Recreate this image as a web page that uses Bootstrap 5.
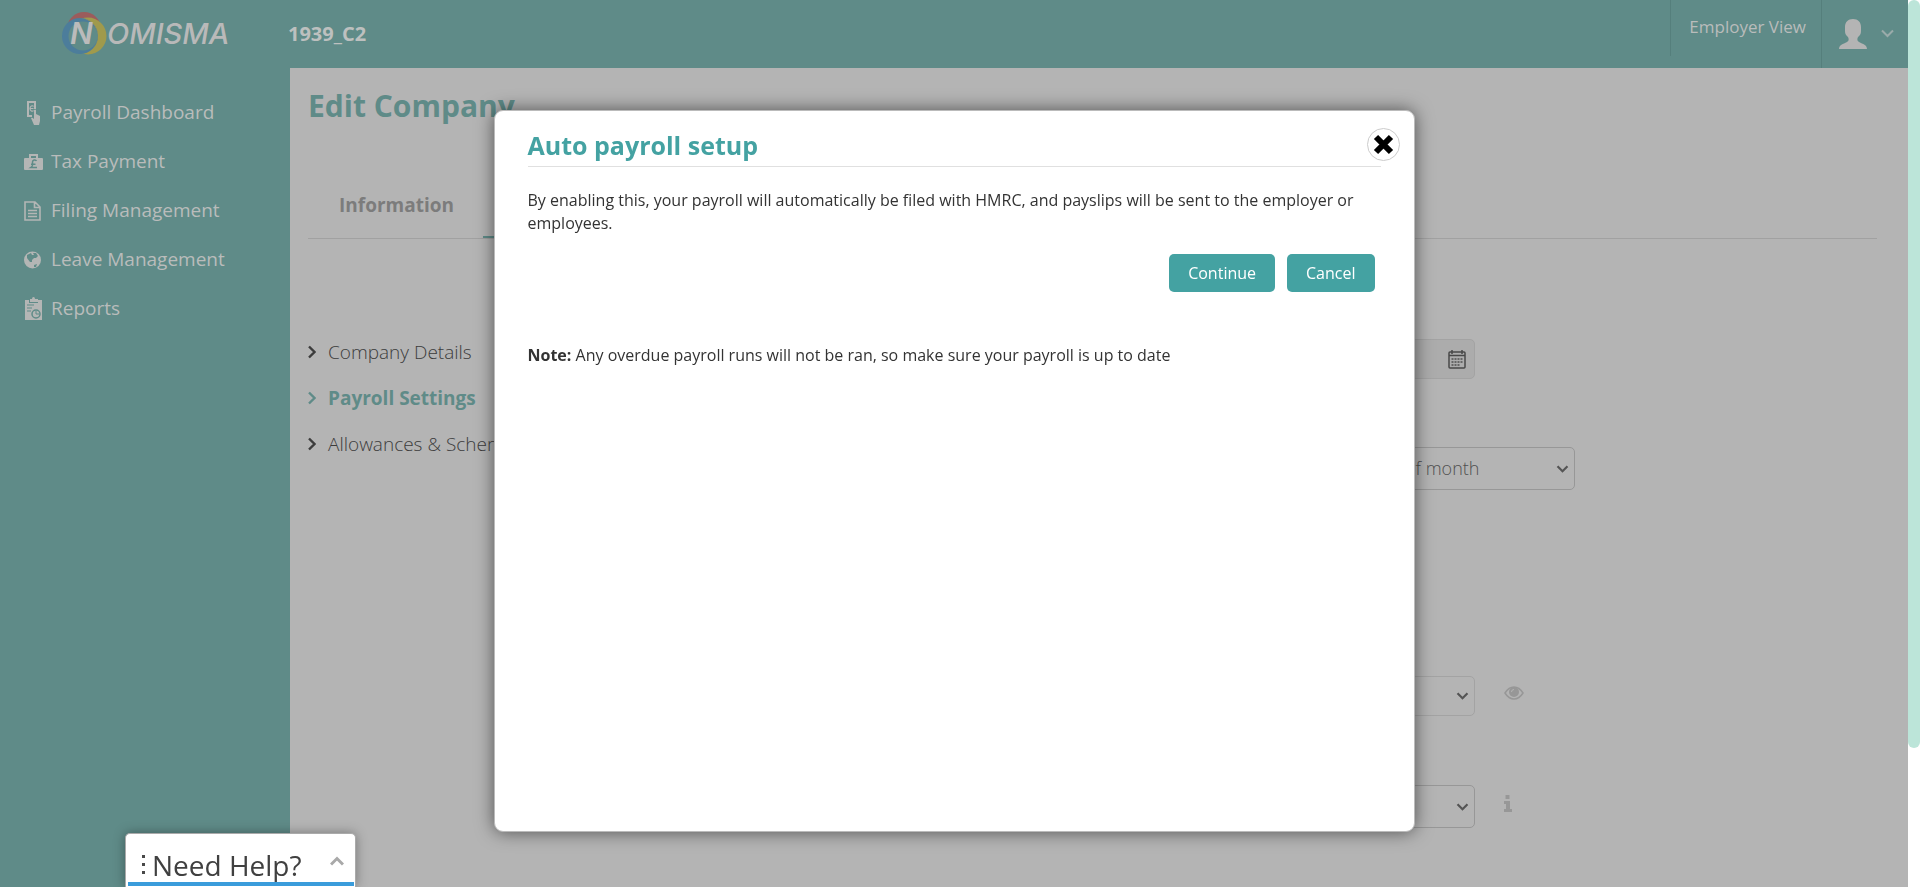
<!DOCTYPE html>
<html lang="en">
<head>
<meta charset="utf-8">
<meta name="viewport" content="width=device-width, initial-scale=1">
<title>Edit Company - Nomisma</title>
<link href="https://cdn.jsdelivr.net/npm/bootstrap@5.3.0/dist/css/bootstrap.min.css" rel="stylesheet">
<style>
  :root { --teal-dim: #5f8b88; --teal: #44a2a2; --page: #b4b4b4; --line: #a1a1a1; --pale: #b9bcbb; }
  body { font-family: "Open Sans", sans-serif; background: #fff; color: #333; overflow: hidden; }
  a { text-decoration: none; }
  .shell { background: var(--page); min-width: 0; }
  .scroll-track { width: 12px; background: #fff; }
  .scroll-thumb { height: 748px; background: #bce5d9; border-radius: 6px; }

  .topbar { height: 68px; background: var(--teal-dim); color: var(--pale); }
  .brand-box { width: 288px; padding: 10px 0 0 61px; }
  .company { font-size: 20px; font-weight: 700; line-height: 68px; color: #bdc0bf; }
  .top-link { height: 56px; padding: 0 15px 0 18px; font-size: 17px; line-height: 54px; color: var(--pale); border-left: 1px solid #557f7c; }
  .user-menu { width: 87px; padding: 0 14px 0 17px; border: 0; border-left: 1px solid #557f7c; background: none; }

  .side { width: 290px; background: var(--teal-dim); padding: 20px 0 0 23px; }
  .side a { height: 49px; font-size: 19px; color: var(--pale); gap: 8px; }
  .side svg { width: 20px; height: 24px; fill: #b4b6b5; }

  .content { padding: 17px 31px 0 18px; min-width: 0; }
  .content h1 { font-size: 30px; line-height: 42px; font-weight: 700; color: var(--teal-dim); margin: 0; }
  .tabs { margin-top: 41px; border-bottom: 1px solid var(--line); }
  .tabs a { width: 175px; height: 70px; padding: 22px 0 0 31px; font-size: 19px; line-height: 30px; font-weight: 700; color: #7c7c7c; border-bottom: 2px solid transparent; }
  .tabs a.active { border-color: var(--teal-dim); }
  .sections { padding-top: 90px; }
  .sections a { height: 46px; font-size: 19px; font-weight: 300; line-height: 46px; color: #3c3c3c; gap: 12px; }
  .sections a.active { font-weight: 700; color: var(--teal-dim); }
  .settings { width: 400px; margin-right: 302px; padding-top: 100px; }
  .field { background-color: transparent; border: 1px solid #a3a3a3; border-radius: 5px; font-size: 18px; color: #666; height: 40px; width: 300px; }
  .field[readonly] { background-color: #acacac; }
  .field-lg { height: 43px; border-color: #979797; }
  .pick { appearance: none; padding: 0 14px; background: no-repeat right 5px center / 13px 8px url("data:image/svg+xml,%3Csvg xmlns='http://www.w3.org/2000/svg' viewBox='0 0 13 8'%3E%3Cpath d='M1.5 1.2 6.5 6.2 11.5 1.2' fill='none' stroke='%23555' stroke-width='2.2'/%3E%3C/svg%3E"); }
  .month { width: 256px; font-weight: 300; color: #505050; }
  .gap-month { padding-top: 68px; }
  .gap-view { padding-top: 186px; }
  .gap-info { padding-top: 69px; }
  .aside-icon { margin: 0 0 6px 29px; }
  .calendar { right: 109px; }

  .dialog-layer { inset: 0 12px 0 0; pointer-events: none; }
  .setup { width: 921px; height: 722px; margin-top: 110px; padding: 16px 33px; background: #fff; border: 1px solid #bbb; border-radius: 9px; box-shadow: 0 0 18px rgba(0,0,0,.55); pointer-events: auto; }
  .setup h2 { font-size: 25px; line-height: 37px; padding-bottom: 2px; font-weight: 700; color: var(--teal); border-bottom: 1px solid #e0e0e0; margin: 0; }
  .setup p { font-size: 16px; line-height: 23px; margin: 0; }
  .setup .message { padding-top: 22px; }
  .setup .choices { padding: 19px 6px 0 0; gap: 12px; }
  .setup .note { padding-top: 52px; }
  .dismiss { position: absolute; top: 17px; right: 14px; width: 33px; height: 33px; padding: 0; border: 1px solid #ccc; border-radius: 50%; background: #fff; }
  .btn-teal, .btn-teal:hover { background: var(--teal); color: #fff; font-size: 16px; line-height: 24px; padding: 6px 18px; border-radius: 5px; }

  .help { left: 125px; bottom: 0; width: 231px; height: 54px; background: #fff; border: 1px solid #aaa; border-bottom: 0; border-radius: 5px 5px 0 0; box-shadow: 0 0 12px rgba(0,0,0,.35); color: #404040; font-size: 28px; line-height: 38px; padding: 8px 11px 0 15px; }
  .help-dots { margin-right: 6px; }
  .help-bar { left: 2px; right: 1px; bottom: 1px; height: 4px; background: #3a9cdb; }
</style>
</head>
<body>
<div class="d-flex vh-100">
  <div class="shell flex-grow-1 d-flex flex-column">
    <header class="topbar d-flex flex-shrink-0">
      <a class="brand-box" href="#" aria-label="Nomisma">
        <svg width="175" height="48" viewBox="61 10 175 48">
          <circle cx="84" cy="29" r="17" fill="#9b5c5c"/>
          <circle cx="88" cy="36" r="18.500" fill="#a09a4c"/>
          <circle cx="80" cy="36" r="18" fill="#4c7d9b"/>
          <path d="M80 18a18 18 0 0 1 12 31 18 18 0 0 0-5-30z" fill="#8f9163"/>
          <circle cx="83" cy="36" r="14.500" fill="#5f8b88"/>
          <text x="70" y="44" font-family="Inter, sans-serif" font-size="30" font-style="italic" font-weight="600" fill="#bbb">N</text>
          <text x="107" y="44" font-family="Inter, sans-serif" font-size="29" font-style="italic" font-weight="500" fill="#b9b9b9">OMISMA</text>
        </svg>
      </a>
      <div class="company">1939_C2</div>
      <a class="top-link ms-auto" href="#">Employer View</a>
      <button class="user-menu d-flex align-items-center justify-content-between" type="button" aria-label="User menu">
        <svg width="28" height="30" viewBox="0 0 28 30"><path fill="#b4b4b4" d="M0 30c0-4 4-5 8-7 2-1 2-3 1-5-2-2-3-3-3-6V8c0-5 3-8 8-8s8 3 8 8v4c0 3-1 4-3 6-1 2-1 4 1 5 4 2 8 3 8 7z"/></svg>
        <svg width="13" height="10" viewBox="0 0 13 10"><path d="M1 1.500 6.500 7 12 1.500" fill="none" stroke="#9aabaa" stroke-width="2"/></svg>
      </button>
    </header>
    <div class="d-flex flex-grow-1">
      <nav class="side flex-shrink-0">
        <a class="d-flex align-items-center" href="#"><svg viewBox="0 0 20 24"><path fill-rule="evenodd" d="M4 0h9v8h-2V2H6v12h3v2H4z"/><path d="M11 9q1.500-1 2 0v4l4 2v5l-1 4h-5l-3-7q1-1 3 1z"/><path d="M10.500 5.500C9.500 4 7 5 7 7.500S9.500 11 10.500 9.500M7 7.500h3.500" fill="none" stroke="#b4b6b5" stroke-width="1.200"/></svg>Payroll Dashboard</a>
        <a class="d-flex align-items-center" href="#"><svg viewBox="0 0 20 24"><path fill-rule="evenodd" d="M6 8V4h9v4h4q1 0 1 1v10q0 1-1 1H2q-1 0-1-1V9q0-1 1-1zm2 0h5V6H8z"/><path d="M13.500 11c-1-2-4-1-4 1 0 3 1 4-1.500 5.500h6M8 14.200h4.500" fill="none" stroke="#5f8b88" stroke-width="1.500"/></svg>Tax Payment</a>
        <a class="d-flex align-items-center" href="#"><svg viewBox="0 0 20 24"><path d="M2 3h10l5 5v13H2zM11.500 3v5.500H17M5 11.500h9M5 14.500h9M5 17.500h9" fill="none" stroke="#b4b6b5" stroke-width="1.600"/></svg>Filing Management</a>
        <a class="d-flex align-items-center" href="#"><svg viewBox="0 0 20 24"><circle cx="9.500" cy="12" r="8.500"/><path fill="#5f8b88" d="m4 7 4-2 1 2 2 0-1-2 3 0 2 3-2 2-2 0-2 2 0 2-2 0-3-4zm7 10 3-1-1 3-2 0z"/></svg>Leave Management</a>
        <a class="d-flex align-items-center" href="#"><svg viewBox="0 0 20 24"><path d="M2 3h4v3h9V3h4v20H2z"/><path d="M7 2h2q0-2 1.500-2T12 2h3v3H7z"/><path d="M4 8h7M4 11h5M4 14h4M13 14v3h3" fill="none" stroke="#5f8b88"/><circle cx="13" cy="17" r="4" fill="none" stroke="#5f8b88" stroke-width="1.500"/></svg>Reports</a>
      </nav>
      <main class="content flex-grow-1">
        <h1>Edit Company</h1>
        <div class="tabs d-flex">
          <a href="#">Information</a>
          <a class="active" href="#" aria-label="Settings"></a>
        </div>
        <div class="d-flex justify-content-between">
          <nav class="sections">
            <a class="d-flex align-items-center" href="#"><svg width="8" height="14" viewBox="0 0 8 14"><path d="m1 1.500 5.500 5.500L1 12.500" fill="none" stroke="currentColor" stroke-width="2.400"/></svg>Company Details</a>
            <a class="d-flex align-items-center active" href="#"><svg width="8" height="14" viewBox="0 0 8 14"><path d="m1 1.500 5.500 5.500L1 12.500" fill="none" stroke="currentColor" stroke-width="2.400"/></svg>Payroll Settings</a>
            <a class="d-flex align-items-center" href="#"><svg width="8" height="14" viewBox="0 0 8 14"><path d="m1 1.500 5.500 5.500L1 12.500" fill="none" stroke="currentColor" stroke-width="2.400"/></svg>Allowances &amp; Schemes</a>
          </nav>
          <form class="settings">
            <div class="position-relative">
              <input class="field" type="text" readonly aria-label="Date">
              <svg class="calendar position-absolute top-50 translate-middle-y" width="18" height="20" viewBox="0 0 18 20"><rect x="1" y="3" width="16" height="16" rx="1" fill="none" stroke="#484848" stroke-width="1.500"/><path d="M1 6.500h16M4 1v4M14 1v4" stroke="#484848" stroke-width="1.500"/><path d="M3.500 10h12M3.500 13h12M3.500 16h9" stroke="#666" stroke-width="2" stroke-dasharray="2 1"/></svg>
            </div>
            <div class="gap-month text-end">
              <select class="field field-lg pick month" aria-label="Pay day"><option>Last day of month</option></select>
            </div>
            <div class="gap-view d-flex align-items-center">
              <select class="field pick flex-shrink-0" aria-label="Setting"><option></option></select>
              <svg class="aside-icon flex-shrink-0" width="20" height="14" viewBox="0 0 20 14"><path d="M1 7c5-8 13-8 18 0-5 8-13 8-18 0z" fill="none" stroke="#979797" stroke-width="1.500"/><circle cx="10" cy="6" r="5" fill="#979797"/><path d="M7.500 6q0-2.500 2.500-2.500" fill="none" stroke="#b4b4b4"/></svg>
            </div>
            <div class="gap-info d-flex align-items-center">
              <select class="field field-lg pick flex-shrink-0" aria-label="Option"><option></option></select>
              <svg class="aside-icon flex-shrink-0" width="8" height="17" viewBox="0 0 8 17"><path fill="#979797" d="M1.500 0h4v4h-4zM0 6h6v8h2v3H0v-3h2V9H0z"/></svg>
            </div>
          </form>
        </div>
      </main>
    </div>
  </div>
  <div class="scroll-track flex-shrink-0"><div class="scroll-thumb"></div></div>
</div>

<div class="dialog-layer position-fixed d-flex justify-content-center align-items-start">
  <section class="setup position-relative" role="dialog" aria-labelledby="setupTitle">
    <h2 id="setupTitle">Auto payroll setup</h2>
    <button class="dismiss d-flex align-items-center justify-content-center" type="button" aria-label="Close"><svg width="21" height="21" viewBox="0 0 21 21"><path d="m3 3 15 15M18 3 3 18" stroke="#000" stroke-width="6"/></svg></button>
    <p class="message">By enabling this, your payroll will automatically be filed with HMRC, and payslips will be sent to the employer or employees.</p>
    <div class="choices d-flex justify-content-end">
      <button class="btn btn-teal" type="button">Continue</button>
      <button class="btn btn-teal" type="button">Cancel</button>
    </div>
    <p class="note"><strong>Note:</strong> Any overdue payroll runs will not be ran, so make sure your payroll is up to date</p>
  </section>
</div>

<button class="help position-fixed d-flex align-items-center" type="button">
  <svg class="help-dots" width="5" height="20" viewBox="0 0 5 20"><path d="M1 0h3v3H1zm0 8h3v3H1zm0 8h3v3H1z" fill="#484848"/></svg>
  Need Help?
  <svg class="ms-auto mb-2" width="14" height="10" viewBox="0 0 14 10"><path d="M1 8.500 7 2.500l6 6" fill="none" stroke="#a9a9a9" stroke-width="3"/></svg>
  <span class="help-bar position-absolute"></span>
</button>
<script src="https://cdn.jsdelivr.net/npm/bootstrap@5.3.0/dist/js/bootstrap.bundle.min.js"></script>
</body>
</html>
